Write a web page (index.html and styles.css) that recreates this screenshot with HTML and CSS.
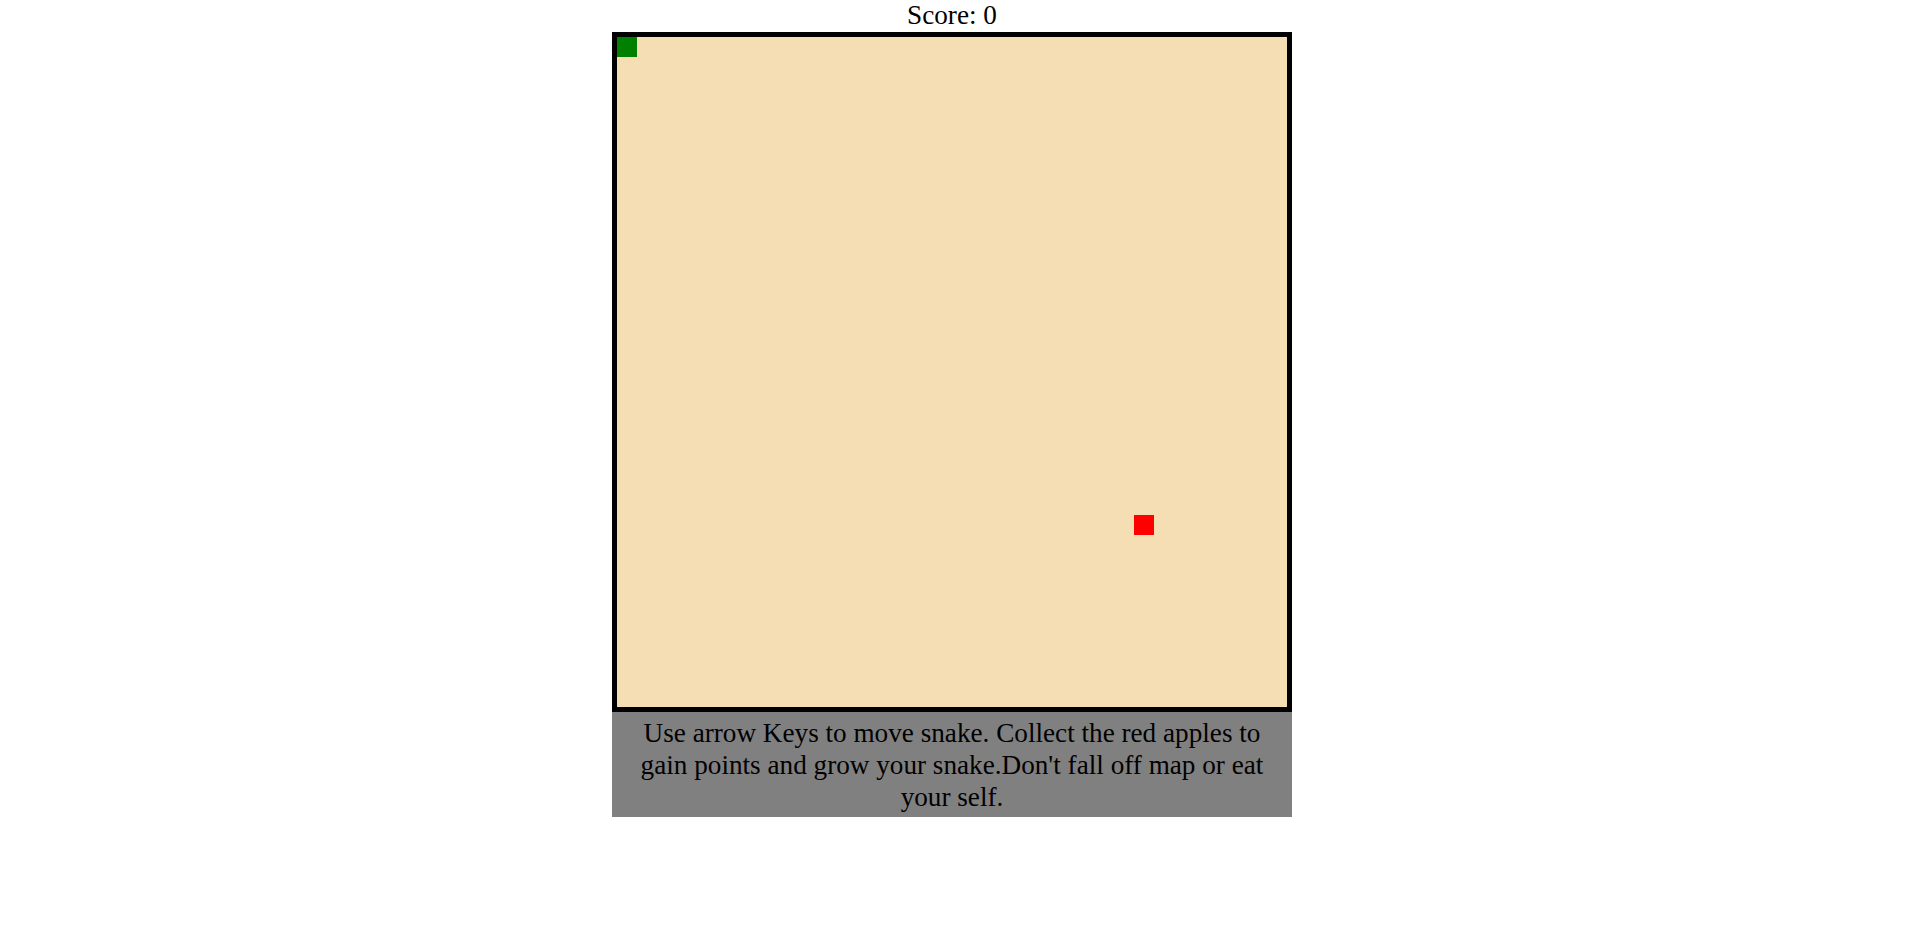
FILE: index.html
```html
<!DOCTYPE html>
<html>
<head>
<meta charset="utf-8">
<title>Snake</title>
<link rel="stylesheet" href="styles.css">
</head>
<body>
<div class="page">
  <div class="score">Score: 0</div>
  <div class="board">
    <div class="cell snake" style="left:0px;top:0px"></div>
    <div class="cell apple" style="left:517px;top:478px"></div>
  </div>
  <div class="help">Use arrow Keys to move snake. Collect the red apples to gain points and grow your snake.Don't fall off map or eat your self.</div>
</div>
</body>
</html>
```

FILE: styles.css
```css
html, body {
  margin: 0;
  padding: 0;
  background: #ffffff;
}
.page {
  width: 1904px;
  display: flex;
  flex-direction: column;
  align-items: center;
  font-family: "Liberation Serif", "Times New Roman", serif;
  font-size: 27.2px;
  color: #000;
}
.score {
  height: 32px;
  line-height: 30px;
  text-align: center;
}
.board {
  position: relative;
  width: 670px;
  height: 670px;
  border: 5px solid #000;
  background: #f5deb3;
}
.cell {
  position: absolute;
  width: 20px;
  height: 20px;
}
.snake {
  background: #008000;
}
.apple {
  background: #ff0000;
}
.help {
  box-sizing: border-box;
  width: 680px;
  height: 105px;
  padding: 5px 16px 0;
  background: #808080;
  text-align: center;
  line-height: 32px;
}
```
